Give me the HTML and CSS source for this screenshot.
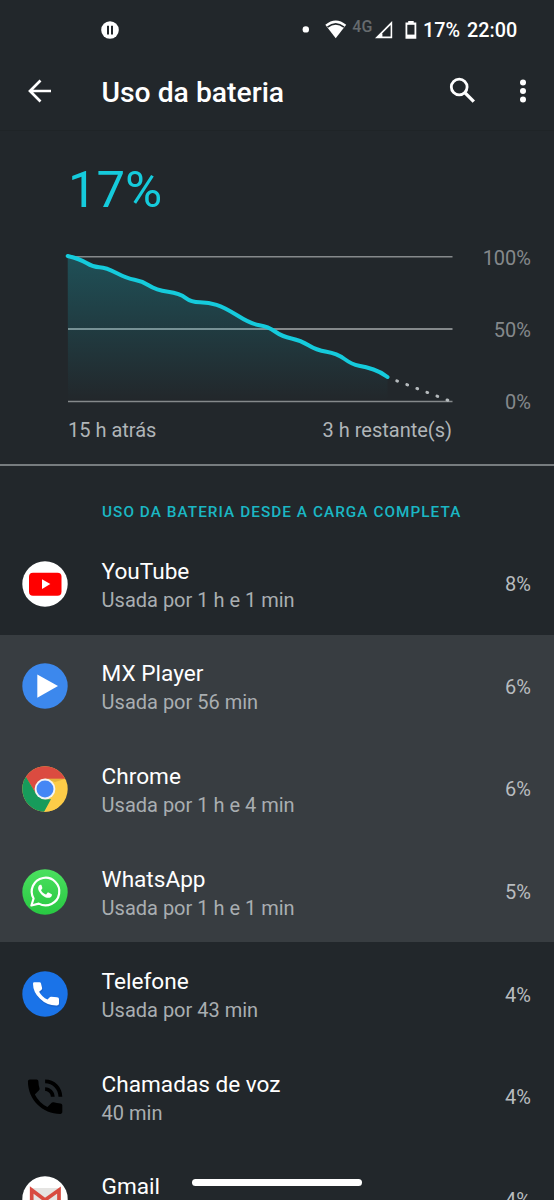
FILE: index.html
```html
<!DOCTYPE html>
<html lang="pt-BR">
<head>
<meta charset="utf-8">
<title>Uso da bateria</title>
<link rel="stylesheet" href="styles.css">
</head>
<body>
<div class="screen">
  <div class="status-bar">
    <svg class="pause" width="18" height="18" viewBox="0 0 18 18"><circle cx="9" cy="9" r="8.8" fill="#fff"/><path d="M7 4.8v8.6M11 4.8v8.6" stroke="#22272b" stroke-width="2"/></svg>
    <svg class="indicators" width="120" height="24" viewBox="300 18 120 24">
      <circle cx="305.8" cy="29.4" r="3.2" fill="#fff"/>
      <path d="M325.3 24.8Q335.7 16.2 346.2 24.8L335.7 38.2Z" fill="#fff"/>
      <path d="M327.5 27.2Q335.7 20.6 344 27.2" fill="none" stroke="#22272b" stroke-width="1.7"/>
      <text class="network" x="352.3" y="31.6">4G</text>
      <path d="M392.2 21v17.2H375Z" fill="#fff"/><path d="M390.6 25v11.5h-8.2v-3.3Z" fill="#22272b"/>
      <path d="M408.2 21h5.5v1.6h2.6v16.2h-10.8V22.6h2.7Z" fill="#fff"/><path d="M407.3 24.8h7.2v9.8h-7.2Z" fill="#22272b"/>
    </svg>
    <span class="status-text">17%</span><span class="status-text clock">22:00</span>
  </div>
  <header class="toolbar">
    <svg class="back" width="26" height="26" viewBox="0 0 26 26"><path d="M24 13H3M13.5 2.5L3 13l10.500 10.500" fill="none" stroke="#fff" stroke-width="2.700"/></svg>
    <h1 class="title">Uso da bateria</h1>
    <svg class="search" width="27" height="27" viewBox="0 0 27 27"><circle cx="10.200" cy="10" r="7.900" fill="none" stroke="#fff" stroke-width="2.800"/><path d="M15.800 15.600l9 9" stroke="#fff" stroke-width="3.400"/></svg>
    <svg class="more" width="8" height="26" viewBox="0 0 8 26"><g fill="#fff"><circle cx="4" cy="4.500" r="3"/><circle cx="4" cy="13" r="3"/><circle cx="4" cy="21.500" r="3"/></g></svg>
  </header>
  <section class="summary">
    <div class="level">17%</div>
    <div class="chart">
      <svg width="400" height="160" viewBox="60 250 400 160">
        <defs><linearGradient id="fade" gradientUnits="userSpaceOnUse" x1="0" y1="256" x2="0" y2="400"><stop offset="0" stop-color="#15cbdc" stop-opacity=".25"/><stop offset="1" stop-color="#15cbdc" stop-opacity="0"/></linearGradient></defs>
        <path class="grid-line" d="M68 256.800H452.500M68 401.500H452.500"/>
        <path class="grid-line middle" d="M68 329H452.500"/>
        <path d="M67.700 256Q80 259 86.500 263T99.500 267.300Q106 267.500 116.500 273Q127 278.500 134.500 279.800Q142 281 149 285.500Q156 290 168 291.800Q180 293.500 185.500 297.800Q191 302 200 302.300Q209 302.500 216.500 304.800Q224 307 237.500 315.500Q251 324 259.500 325.300Q268 326.500 275 331.500Q282 336.500 291.500 338.500Q301 340.500 308.500 345.300Q316 350 326.500 351.800Q337 353.500 344.500 359Q352 364.500 359 365.800Q366 367 373.500 369.500Q381 372 387.500 377V401H68Z" fill="url(#fade)"/>
        <path class="usage-line" d="M67.700 256Q80 259 86.500 263T99.500 267.300Q106 267.500 116.500 273Q127 278.500 134.500 279.800Q142 281 149 285.500Q156 290 168 291.800Q180 293.500 185.500 297.800Q191 302 200 302.300Q209 302.500 216.500 304.800Q224 307 237.500 315.500Q251 324 259.500 325.300Q268 326.500 275 331.500Q282 336.500 291.500 338.500Q301 340.500 308.500 345.300Q316 350 326.500 351.800Q337 353.500 344.500 359Q352 364.500 359 365.800Q366 367 373.500 369.500Q381 372 387.500 377"/>
        <path class="forecast" d="M396.800 380.800L449 400.700"/>
      </svg>
      <div class="scale"><span>100%</span><span>50%</span><span>0%</span></div>
    </div>
    <div class="times"><span>15 h atrás</span><span>3 h restante(s)</span></div>
  </section>
  <h2 class="section-title">USO DA BATERIA DESDE A CARGA COMPLETA</h2>
  <main class="apps">
    <div class="app">
      <svg class="app-icon" viewBox="0 0 46 46"><circle cx="23" cy="23" r="22.700" fill="#fff"/><rect x="7" y="11.800" width="32.500" height="23" rx="4" fill="#f00"/><path d="M20 18.300l8.300 4.800-8.300 4.800Z" fill="#fff"/></svg>
      <div class="info"><div class="name">YouTube</div><div class="usage">Usada por 1 h e 1 min</div></div><span class="percent">8%</span>
    </div>
    <div class="app selected">
      <svg class="app-icon" viewBox="0 0 46 46"><circle cx="23" cy="23" r="22.700" fill="#3c88ed"/><path d="M15.300 11.500L36 23.100 15.300 34.700Z" fill="#fff"/></svg>
      <div class="info"><div class="name">MX Player</div><div class="usage">Usada por 56 min</div></div><span class="percent">6%</span>
    </div>
    <div class="app selected">
      <svg class="app-icon" viewBox="0 0 46 46"><defs><clipPath id="disc"><circle cx="23" cy="23" r="22.700"/></clipPath></defs><g clip-path="url(#disc)"><path d="M0 0h46v46H0Z" fill="#fdcc48"/><path d="M0 0H46V12.800H23L14.200 28.100 3.700 11Z" fill="#db4b40"/><path d="M3.700 10.500L14.200 28.100 23 33.200H32.500L22 46H0V10Z" fill="#179b5b"/><path d="M31.800 28.100L22 46H35L42 30 33 25Z" fill="#fdcc48"/><path d="M23 12.800H43.500L33 16Z" fill="#b88624" opacity=".35"/></g><circle cx="23" cy="23" r="10.400" fill="#f4f4f4"/><circle cx="23" cy="23" r="8.500" fill="#4587f5"/></svg>
      <div class="info"><div class="name">Chrome</div><div class="usage">Usada por 1 h e 4 min</div></div><span class="percent">6%</span>
    </div>
    <div class="app selected">
      <svg class="app-icon" viewBox="0 0 46 46"><defs><linearGradient id="green" x2="0" y2="1"><stop stop-color="#4be05f"/><stop offset="1" stop-color="#28c842"/></linearGradient></defs><circle cx="23" cy="23" r="22.700" fill="url(#green)"/><path d="M9.400 36.500L11.600 29.500A13.800 13.800 0 1 1 16.800 34.600Z" fill="none" stroke="#fff" stroke-width="2.200" stroke-linejoin="round"/><path transform="translate(15.300 14.700) scale(.88)" d="M3.700 1.200C2.300 1.200.9 3 .9 5.200c0 2.500 2 5.200 4.400 7.500 2.700 2.400 5.300 3.500 7.300 3.400 1.900-.1 3.500-1.200 3.900-2.700.3-1 .2-1.400-.6-1.800l-3.100-1.500c-.7-.3-1-.1-1.300.3l-1.200 1.500c-.3.400-.7.400-1.200.2-2-.9-3.700-2.500-4.700-4.300-.2-.4-.1-.7.200-1l1-1.300c.2-.4.200-.6.100-1L4.800 1.800c-.2-.5-.5-.6-1.100-.6Z" fill="#fff"/></svg>
      <div class="info"><div class="name">WhatsApp</div><div class="usage">Usada por 1 h e 1 min</div></div><span class="percent">5%</span>
    </div>
    <div class="app">
      <svg class="app-icon" viewBox="0 0 46 46"><circle cx="23" cy="23" r="22.700" fill="#1a73e8"/><path d="M12.300 11.300H17.500Q18.700 11.300 19 12.500L20.100 17Q20.300 18 19.500 18.700L17.100 20.700Q20 26 25.500 28.600L27.500 26.400Q28.100 25.600 29.200 25.700L35 26.200Q37 26.400 37 28V32.500Q37 34.500 34.800 34.600Q25 34.800 17.800 27.600Q11 20.800 11 12.700Q11 11.300 12.300 11.300Z" transform="translate(.8 1.600)" fill="#174ea6" opacity=".35"/><path d="M12.300 11.300H17.500Q18.700 11.300 19 12.500L20.100 17Q20.300 18 19.500 18.700L17.100 20.700Q20 26 25.500 28.600L27.500 26.400Q28.100 25.600 29.200 25.700L35 26.200Q37 26.400 37 28V32.500Q37 34.500 34.800 34.600Q25 34.800 17.800 27.600Q11 20.800 11 12.700Q11 11.300 12.300 11.300Z" fill="#fff"/></svg>
      <div class="info"><div class="name">Telefone</div><div class="usage">Usada por 43 min</div></div><span class="percent">4%</span>
    </div>
    <div class="app">
      <svg class="app-icon" viewBox="0 0 46 46"><path transform="translate(.2 -.200) scale(1.910)" d="M20 15.500c-1.250 0-2.450-.2-3.570-.57a.98.980 0 0 0-1.020.24l-2.200 2.200a15.045 15.045 0 0 1-6.590-6.590l2.200-2.210a.96.960 0 0 0 .25-1A11.360 11.360 0 0 1 8.500 4c0-.55-.45-1-1-1H4c-.55 0-1 .45-1 1 0 9.390 7.610 17 17 17 .55 0 1-.45 1-1v-3.500c0-.55-.45-1-1-1zM19 12h2a9 9 0 0 0-9-9v2c3.870 0 7 3.130 7 7zm-4 0h2c0-2.760-2.240-5-5-5v2c1.660 0 3 1.340 3 3z"/></svg>
      <div class="info"><div class="name">Chamadas de voz</div><div class="usage">40 min</div></div><span class="percent">4%</span>
    </div>
    <div class="app">
      <svg class="app-icon" viewBox="0 0 46 46"><circle cx="23" cy="23" r="22.700" fill="#fff"/><path d="M9 12h28v23H9Z" fill="#e5e4e2"/><path d="M9.700 35V14L23 24 37 14V35" fill="none" stroke="#d84b40" stroke-width="3.700"/></svg>
      <div class="info"><div class="name">Gmail</div></div><span class="percent">4%</span>
    </div>
  </main>
  <div class="home-handle"></div>
</div>
</body>
</html>
```
FILE: styles.css
```css
* { box-sizing: border-box; }
body { margin: 0; background: #22272b; }
svg { display: block; flex-shrink: 0; }
.screen { position: relative; width: 554px; height: 1200px; overflow: hidden; background: #22272b; color: #fff; font-family: Roboto, sans-serif; }
.status-bar { height: 60px; display: flex; align-items: center; padding-left: 101px; }
.pause { margin-right: 181px; }
.network { font: 500 16px Roboto, sans-serif; fill: #666b6e; }
.status-text { font-size: 19.800px; font-weight: 500; line-height: 24px; margin: 1px 0 0 3px; width: 37px; white-space: nowrap; }
.clock { margin-left: 7px; }
.toolbar { height: 71px; padding: 0 27px 9px; display: flex; align-items: center; border-bottom: 1px solid #1f2427; }
.title { margin: 4px 0 0 48.500px; flex: 1; font-size: 28.300px; font-weight: 500; line-height: 36px; white-space: nowrap; }
.search { margin-right: 43px; }
.summary { height: 335px; padding-top: 29px; border-bottom: 2px solid #777c7f; }
.level { height: 60px; padding-left: 68px; font-size: 50.800px; line-height: 60px; color: #15cbdc; }
.chart { display: flex; margin-top: 30px; height: 160px; padding-left: 60px; }
.grid-line { stroke: #85898b; stroke-width: 1.500; }
.middle { stroke-width: 2; }
.usage-line { fill: none; stroke: #15cbdc; stroke-width: 4; stroke-linecap: round; }
.forecast { stroke: #b5babd; stroke-width: 3; stroke-linecap: round; stroke-dasharray: .8 9.950; }
.scale { flex: 1; height: 168px; margin-top: -4px; padding-right: 23px; display: flex; flex-direction: column; justify-content: space-between; align-items: flex-end; font-size: 20px; line-height: 24px; color: #85898b; }
.times { display: flex; justify-content: space-between; padding: 0 102px 0 68px; margin-top: 8px; font-size: 20px; line-height: 24px; color: #b0b5b8; }
.section-title { margin: 0; height: 66px; padding: 34px 0 0 102px; font-size: 15.300px; line-height: 24px; font-weight: 500; letter-spacing: 1.060px; color: #1bb7c4; white-space: nowrap; }
.app { display: flex; align-items: center; height: 102.600px; padding: 1px 23px 0 22px; }
.selected { background: #383d41; }
.app-icon { width: 46px; height: 46px; }
.info { margin-left: 33.600px; padding-top: 3px; height: 60px; flex: 1; }
.name { font-size: 22.600px; line-height: 30px; }
.usage { font-size: 20px; line-height: 26px; color: #a9aeb1; }
.percent { padding-top: 1px; font-size: 20px; color: #b8bcbf; }
.home-handle { position: absolute; left: 192px; top: 1179px; width: 170px; height: 7px; border-radius: 4px; background: #fff; }
```
